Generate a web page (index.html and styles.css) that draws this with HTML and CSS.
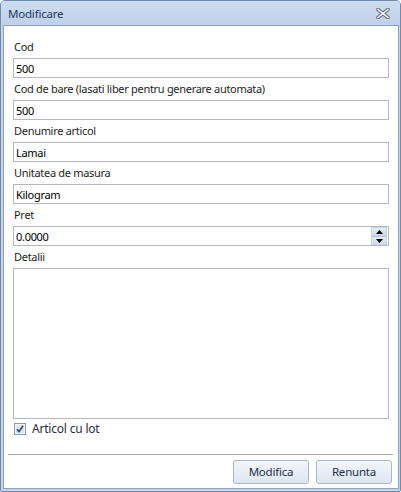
FILE: index.html
```html
<!DOCTYPE html>
<html>
<head>
<meta charset="utf-8">
<link rel="stylesheet" href="styles.css">
</head>
<body>
<div class="window">
  <div class="titlebar">
    <span class="title">Modificare</span>
    <svg class="close" width="14" height="11" viewBox="0 0 14 11">
      <path d="M2 1.5 L12 9.5 M12 1.5 L2 9.5" stroke="#6b7380" stroke-width="3.6" stroke-linecap="round"/>
      <path d="M2 1.5 L12 9.5 M12 1.5 L2 9.5" stroke="#ffffff" stroke-width="1.6" stroke-linecap="round"/>
    </svg>
  </div>
  <div class="client">
    <div class="form">
      <div class="group">
        <div class="label">Cod</div>
        <div class="field">500</div>
      </div>
      <div class="group">
        <div class="label">Cod de bare (lasati liber pentru generare automata)</div>
        <div class="field">500</div>
      </div>
      <div class="group">
        <div class="label">Denumire articol</div>
        <div class="field">Lamai</div>
      </div>
      <div class="group">
        <div class="label">Unitatea de masura</div>
        <div class="field">Kilogram</div>
      </div>
      <div class="group">
        <div class="label">Pret</div>
        <div class="field spin">
          <span class="spin-text">0.0000</span>
          <div class="spinner">
            <div class="spin-btn"><svg width="7" height="4" viewBox="0 0 7 4"><path d="M0 4 L3.5 0 L7 4 Z" fill="#000"/></svg></div>
            <div class="spin-btn"><svg width="7" height="4" viewBox="0 0 7 4"><path d="M0 0 L3.5 4 L7 0 Z" fill="#000"/></svg></div>
          </div>
        </div>
      </div>
      <div class="group">
        <div class="label">Detalii</div>
        <div class="area"></div>
      </div>
      <div class="check-row">
        <svg class="check" width="12" height="12" viewBox="0 0 12 12">
          <rect x="0.5" y="0.5" width="11" height="11" fill="#f4f6f9" stroke="#8e9bad"/>
          <rect x="2" y="2" width="8" height="8" fill="#dbe4ef"/>
          <path d="M3 6.2 L5 8.6 L9 2.8" stroke="#2b4a78" stroke-width="1.6" fill="none"/>
        </svg>
        <span class="check-label">Articol cu lot</span>
      </div>
    </div>
    <div class="footer">
      <div class="sep"></div>
      <div class="buttons">
        <div class="btn">Modifica</div>
        <div class="btn">Renunta</div>
      </div>
    </div>
  </div>
</div>
</body>
</html>
```
FILE: styles.css
```css
html, body {
  margin: 0;
  padding: 0;
  background: #ffffff;
}
body {
  width: 401px;
  height: 492px;
  font-family: "Noto Sans", "Open Sans", sans-serif;
  font-size: 11px;
  letter-spacing: -0.3px;
  color: #1e1e1e;
}
.window {
  box-sizing: border-box;
  width: 401px;
  height: 492px;
  border: 1px solid #7189aa;
  border-radius: 5px 5px 2px 2px;
  background: #c3d4eb;
  display: flex;
  flex-direction: column;
}
.titlebar {
  height: 24px;
  display: flex;
  align-items: center;
  justify-content: space-between;
  padding: 0 10px 0 7px;
  background: linear-gradient(#cddcf0, #bfd1ea);
  border-radius: 4px 4px 0 0;
}
.title {
  color: #1e395b;
  font-size: 11.5px;
  letter-spacing: -0.2px;
  line-height: 16px;
  margin-top: 2px;
}
.close {
  display: block;
}
.client {
  flex: 1;
  margin: 0 1px 2px 2px;
  border: 1px solid #8ea3bf;
  background: #ffffff;
  display: flex;
  flex-direction: column;
}
.form {
  padding: 12px 9px 0 9px;
}
.group {
  margin-bottom: 2px;
}
.label {
  height: 16px;
  line-height: 17px;
  margin-bottom: 4px;
  padding-left: 1px;
  white-space: nowrap;
}
.field {
  box-sizing: border-box;
  height: 20px;
  border: 1px solid #b4b9c1;
  padding-left: 2px;
  line-height: 19px;
  color: #000;
}
.spin {
  display: flex;
  align-items: stretch;
  padding-right: 1px;
}
.spin-text {
  flex: 1;
}
.spinner {
  width: 16px;
  display: flex;
  flex-direction: column;
}
.spin-btn {
  flex: 1;
  display: flex;
  align-items: center;
  justify-content: center;
  background: linear-gradient(#e4edf8, #cfdcec);
  border: 1px solid #c9d4e2;
}
.spin-btn + .spin-btn {
  border-top: 1px solid #b9c6d8;
}
.spin-btn svg {
  display: block;
}
.area {
  box-sizing: border-box;
  height: 151px;
  border: 1px solid #b4b9c1;
}
.check-row {
  display: flex;
  align-items: center;
  margin-top: 2px;
  height: 16px;
}
.check {
  display: block;
  margin-left: 1px;
}
.check-label {
  margin-left: 6px;
  line-height: 16px;
  color: #2c2c44;
  font-size: 12px;
  letter-spacing: -0.2px;
}
.footer {
  margin-top: auto;
  padding: 0 5px 4px 4px;
}
.sep {
  height: 1px;
  background: #a5a5a5;
}
.buttons {
  display: flex;
  justify-content: flex-end;
  gap: 7px;
  margin-top: 5px;
  padding-right: 1px;
}
.btn {
  box-sizing: border-box;
  height: 24px;
  width: 76px;
  border: 1px solid #a9b7c9;
  border-radius: 3px;
  background: linear-gradient(#f3f6fa, #dde6f1);
  text-align: center;
  line-height: 22px;
  color: #1e2f4a;
  font-size: 11.5px;
  letter-spacing: -0.2px;
}
```
